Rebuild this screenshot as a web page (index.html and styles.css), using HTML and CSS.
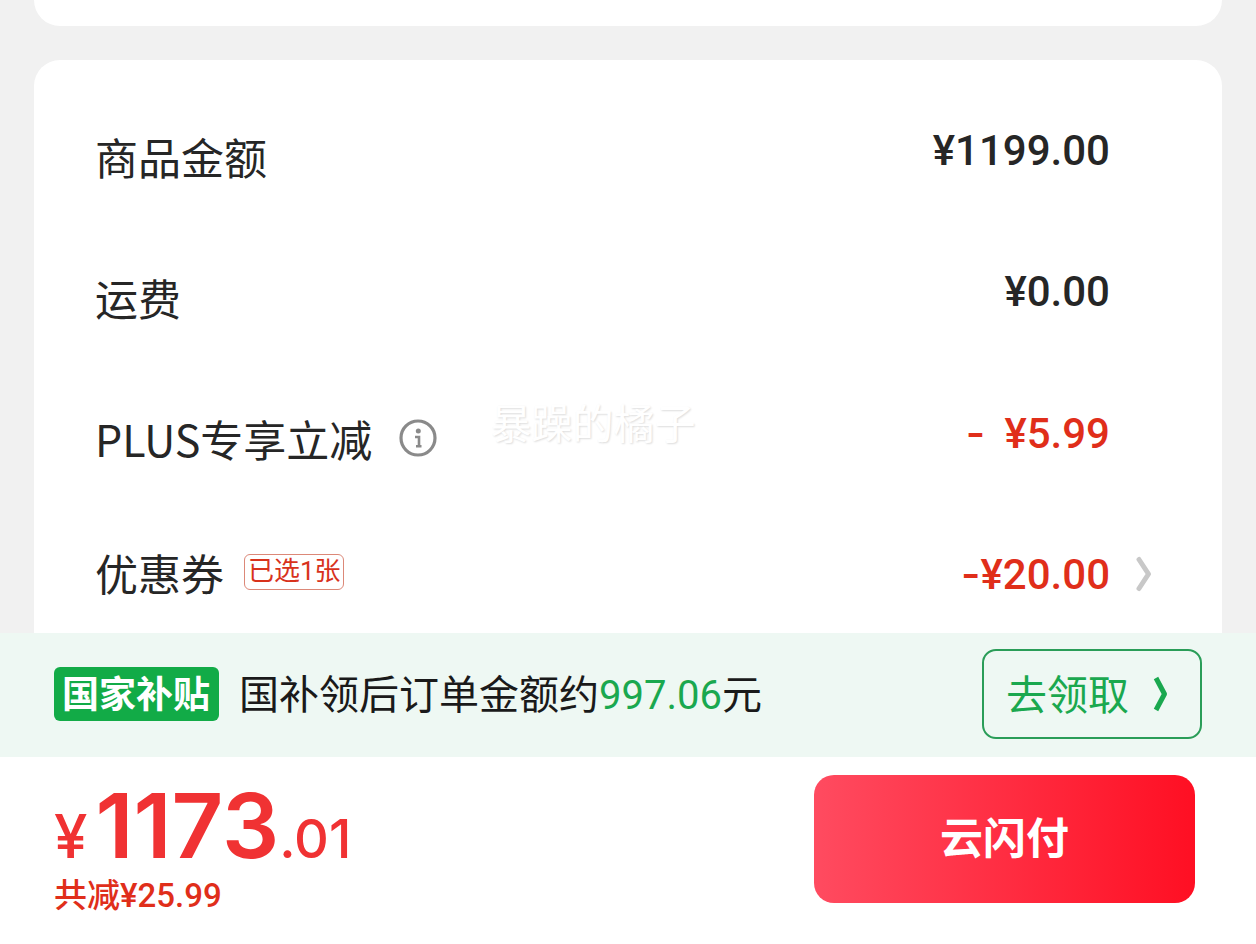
FILE: index.html
```html
<!DOCTYPE html>
<html lang="zh-CN">
<head>
<meta charset="utf-8">
<meta name="viewport" content="width=device-width, initial-scale=1">
<title>确认订单</title>
<link rel="stylesheet" href="styles.css">
</head>
<body>
<main class="sheet">
  <section class="card card-previous"></section>
  <section class="card card-amounts">
    <div class="row">
      <span class="label">商品金额</span>
      <span class="value">¥1199.00</span>
    </div>
    <div class="row">
      <span class="label">运费</span>
      <span class="value">¥0.00</span>
    </div>
    <div class="row">
      <span class="label">PLUS专享立减
        <button class="info" type="button" aria-label="说明">
          <svg width="40" height="40" viewBox="0 0 40 40" fill="none" stroke="#8a8a8a">
            <circle cx="20" cy="20" r="17" stroke-width="3.2"/>
            <circle cx="20.3" cy="13" r="2.5" fill="#8a8a8a" stroke="none"/>
            <path d="M17 19H21V28M18 28.2H23.5" stroke-width="2.6"/>
          </svg>
        </button>
      </span>
      <span class="value discount"><span class="minus minus-spaced">- </span>¥5.99</span>
      <span class="watermark">暴躁的橘子</span>
    </div>
    <div class="row row-coupon">
      <span class="label">优惠券<span class="badge">已选1张</span></span>
      <button class="value discount coupon" type="button">
        <span><span class="minus">-</span>¥20.00</span>
        <svg width="16" height="36" viewBox="0 0 16 36" fill="none" stroke="#c8c8c8" stroke-width="5" stroke-linecap="round" stroke-linejoin="round"><path d="M3 3.5L12.5 18L3 32.5"/></svg>
      </button>
    </div>
  </section>
</main>
<aside class="subsidy">
  <strong class="tag">国家补贴</strong>
  <p class="subsidy-text">国补领后订单金额约<span class="subsidy-price">997.06</span>元</p>
  <button class="claim" type="button">
    <span class="claim-text">去领取</span>
    <svg width="16" height="36" viewBox="0 0 16 36" fill="none" stroke="#1aa84f" stroke-width="5" stroke-linejoin="round"><path d="M3 2L11.5 18L3 34"/></svg>
  </button>
</aside>
<footer class="checkout">
  <div class="total">
    <p class="price"><span class="price-currency">¥</span><span class="price-main">1173</span><span class="price-cents">.01</span></p>
    <p class="saved">共减¥25.99</p>
  </div>
  <button class="pay" type="button">云闪付</button>
</footer>
</body>
</html>
```
FILE: styles.css
```css
* {
  box-sizing: border-box;
}

body {
  margin: 0;
  min-height: 100vh;
  display: flex;
  flex-direction: column;
  background: #f1f1f1;
  color: #262626;
  font-family: "Noto Sans CJK SC", sans-serif;
}

button {
  margin: 0;
  padding: 0;
  border: 0;
  background: none;
  color: inherit;
  font: inherit;
  cursor: pointer;
}

svg {
  display: block;
  flex: none;
}

p {
  margin: 0;
}

.sheet {
  flex: 1;
  display: flex;
  flex-direction: column;
  gap: 34px;
  padding: 0 34px;
}

.card {
  background: #fff;
}

.card-previous {
  height: 26px;
  border-radius: 0 0 26px 26px;
}

.card-amounts {
  flex: 1;
  display: flex;
  flex-direction: column;
  gap: 77px;
  padding: 66px 112px 34px 61px;
  border-radius: 26px 26px 0 0;
}

.row {
  position: relative;
  display: flex;
  justify-content: space-between;
  align-items: flex-start;
}

.label {
  display: flex;
  align-items: center;
  padding-bottom: 4px;
  font-size: 43px;
  line-height: 60px;
}

.info {
  margin-left: 26px;
}

.value {
  font-family: Roboto, "Noto Sans CJK SC", sans-serif;
  font-size: 42px;
  font-weight: 500;
  line-height: 50px;
}

.minus {
  font-family: Inter, Roboto, sans-serif;
}

.minus-spaced {
  margin-right: 8px;
}

.discount {
  color: #e02e1a;
}

.watermark {
  position: absolute;
  top: -17px;
  left: 50%;
  transform: translateX(-112px);
  color: #fff;
  font-size: 41px;
  line-height: 60px;
  text-shadow: 1px 1px 2px #ddd;
  white-space: nowrap;
  pointer-events: none;
}

.row-coupon {
  align-items: center;
  height: 50px;
  margin-right: -42px;
}

.coupon {
  display: flex;
  align-items: center;
  gap: 26px;
}

.badge {
  margin-left: 20px;
  padding: 0 2px 2px 3px;
  border: 1px solid #dc8878;
  border-radius: 6px;
  color: #d8321c;
  font-family: Roboto, "Noto Sans CJK SC", sans-serif;
  font-size: 26px;
  line-height: 32px;
}

.subsidy {
  display: flex;
  align-items: center;
  height: 124px;
  padding: 0 54px 2px;
  background: #eef8f3;
}

.tag {
  padding: 0 9px 4px 8px;
  border-radius: 6px;
  background: #12ab47;
  color: #fff;
  font-size: 37px;
  line-height: 50px;
}

.subsidy-text {
  margin-left: 20px;
  color: #1a1a1a;
  font-size: 40px;
  line-height: 60px;
}

.subsidy-price {
  color: #1aa84f;
  font-family: Roboto, sans-serif;
}

.claim {
  display: flex;
  align-items: center;
  gap: 24px;
  height: 90px;
  margin-left: auto;
  padding: 0 31px 0 22px;
  border: 2px solid #2a9d58;
  border-radius: 14px;
  color: #1aa84f;
  font-size: 41px;
}

.claim-text {
  padding-bottom: 4px;
}

.checkout {
  display: flex;
  align-items: flex-start;
  justify-content: space-between;
  padding: 18px 61px 41px 54px;
  background: #fff;
}

.total {
  padding-top: 13px;
}

.price {
  display: flex;
  align-items: baseline;
  color: #f03233;
  font-family: Inter, Roboto, sans-serif;
  font-weight: 500;
  line-height: 76px;
}

.price-currency {
  font-size: 60px;
}

.price-main {
  margin-left: 8px;
  font-size: 90px;
  font-weight: 600;
}

.price-cents {
  font-size: 54px;
}

.saved {
  color: #e02e1a;
  font-family: Roboto, "Noto Sans CJK SC", sans-serif;
  font-size: 33px;
  font-weight: 500;
  line-height: 38px;
}

.pay {
  width: 381px;
  height: 128px;
  padding-bottom: 8px;
  border-radius: 20px;
  background: linear-gradient(90deg, #ff4b60, #ff0f23);
  color: #fff;
  font-size: 43px;
  font-weight: 700;
}
```
